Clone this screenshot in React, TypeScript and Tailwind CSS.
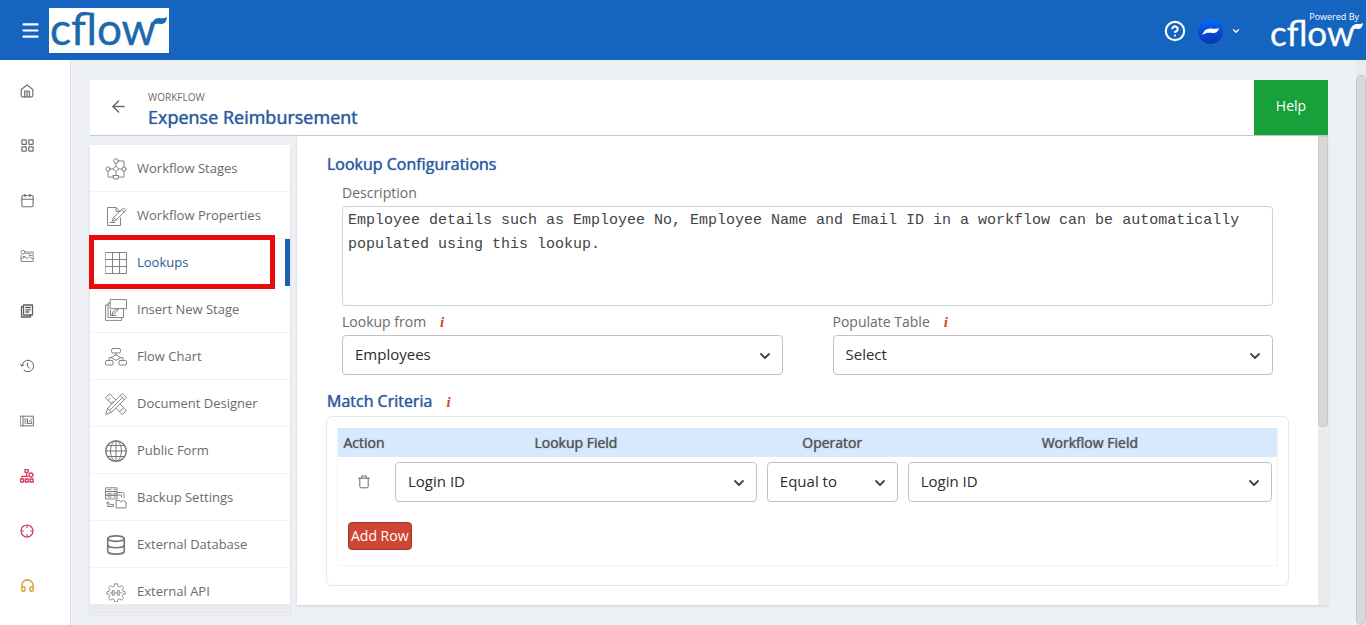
import React, { useState } from 'react';
import { ArrowLeft, Calendar, ChevronDown, CircleHelp, Database, Headphones, LayoutGrid, Menu } from 'lucide-react';

const Svg: React.FC<{ size: number; box: string; width?: number; children: React.ReactNode }> = ({ size, box, width = 1, children }) => (
  <svg width={size} height={size} viewBox={box} fill="none" stroke="currentColor" strokeWidth={width} strokeLinejoin="round" strokeLinecap="round">
    {children}
  </svg>
);

const HomeIcon = () => (
  <Svg size={14} box="0 0 14 14" width={1.2}>
    <path d="M1.2 5.4 7 1l5.8 4.4v6.2a1.2 1.2 0 0 1-1.2 1.2H2.4a1.2 1.2 0 0 1-1.2-1.2z" />
    <path d="M4.7 12.8V7h4.6v5.8M7 7v5.8" />
  </Svg>
);

const CardIcon = () => (
  <Svg size={14} box="0 0 14 14" width={0.8}>
    <path d="M6 3h7.2v9.5H1V6" />
    <circle cx="3" cy="3.2" r="2" />
    <path d="M6 4.7h5M3 7.5h2M1 10l3.5-2 3 1.5 2-1.5 3.5 2M9 6.5h3" />
  </Svg>
);

const FormsIcon = () => (
  <Svg size={14} box="0 0 14 14" width={1.3}>
    <path d="M3.5 1h9v10h-9z" />
    <path d="M3.5 2.7h-2V13h9v-2M5.8 3.5h4.5M5.8 5.8h4.5M5.8 8h3" />
  </Svg>
);

const HistoryIcon = () => (
  <Svg size={14} box="0 0 14 14">
    <path d="M2 7a5.800 5.800 0 1 1 2 4.400" />
    <path d="m.5 5.500 1.500 1.700 1.800-1.500M7.500 4v3.200l2 2" />
  </Svg>
);

const BoardIcon = () => (
  <Svg size={14} box="0 0 14 14">
    <path d="M.6 2.200h12.800v9.600H.6zM3 2.200v9.600M4.700 5h1.500M4.700 7h1.500M4.700 9h1.500M7.500 5v4.500h4V7.500" />
    <path d="m8.800 8 3-3" />
  </Svg>
);

const OrgIcon = () => (
  <Svg size={14} box="0 0 14 14" width={1.3}>
    <path d="M5 .7h3.200v2.600H5zM6.600 3.300v4M2 8.500V7.300h6" />
    <circle cx="11" cy="6" r="2" />
    <path d="M.6 10h3v3h-3zM5.400 10h3v3h-3zM10.200 10h3v3h-3z" />
  </Svg>
);

const TargetIcon = () => (
  <Svg size={14} box="0 0 14 14" width={1.2}>
    <circle cx="7" cy="7" r="6" />
    <path d="M7 1v2.500M7 10.500V13M1 7h2.500M10.500 7H13" />
  </Svg>
);

const TrashIcon = () => (
  <Svg size={14} box="0 0 14 14">
    <path d="M1.500 3.200h11M4.700 3V1h4.600v2M2.800 3.200v8.300q0 1.300 1.300 1.300h5.800q1.300 0 1.300-1.300V3.200" />
  </Svg>
);

const StagesIcon = () => (
  <Svg size={22} box="0 0 22 22" width={0.9}>
    <circle cx="11" cy="3" r="2.3" />
    <circle cx="3" cy="11" r="2.1" />
    <circle cx="19" cy="11" r="2.1" />
    <path d="M8.300 17.500h5.400l-.8 3.500H9.100zM11 8.300l2.700 2.700-2.700 2.700L8.300 11zM11 5.300v3M5.100 11h3.200M13.700 11h3.200M11 13.700v3.800M13.300 3H19v5.900M3 13.100v6h5.700M13.300 19.100H19v-6" />
  </Svg>
);

const PropertiesIcon = () => (
  <Svg size={22} box="0 0 22 22" width={0.9}>
    <path d="M15.500 13v7.500h-13v-18H11l4 4M11 2.500v4h4" />
    <path d="m8.500 12.500 10-9.500 2.300 2.300-9.600 9.700-3.700 1.200zM16.800 4.700 19 7M8.500 12.500l2.700 2.500M5 17.500h5" />
  </Svg>
);

const GridIcon = () => (
  <Svg size={22} box="0 0 22 22" width={0.9}>
    <path d="M.5.5h21v21H.5zM.5 7.500h21M.5 14.500h21M7.500.5v21M14.500.5v21" />
  </Svg>
);

const InsertIcon = () => (
  <Svg size={22} box="0 0 22 22" width={0.9}>
    <path d="M5.500.6h16v9h-16zM5.500 4H3v14.500h15.500v-9" />
    <path d="M3 6H.6v15.400h16v-2.900M5.500 11.500v5h5.500M7 15.500l.8-2.500 4-3h1.500l-1.500 2.500-3.500 2.500z" />
  </Svg>
);

const FlowIcon = () => (
  <Svg size={22} box="0 0 22 22" width={0.9}>
    <rect x="6.5" y="2.5" width="9" height="4.5" rx="1.5" />
    <rect x=".5" y="14.5" width="7.5" height="4.5" rx="1" />
    <rect x="14" y="14.5" width="7.5" height="4.5" rx="1" />
    <path d="M11 7v2M11 9l4.500 2.700L11 14.400 6.500 11.700zM6.500 11.700H4v2.800M15.500 11.700H18v2.800" />
  </Svg>
);

const DesignerIcon = () => (
  <Svg size={22} box="0 0 22 22" width={0.9}>
    <path d="M.7 4.500 4.500.7l16.800 16.800-3.800 3.800zM3.500 7.300l1.700-1.700M6.300 10.100l1.700-1.700M14.700 18.500l1.700-1.700M17.500 15.500l-1.500 1.500" />
    <path d="M17.500.7 21.300 4.500 6.500 19.300.7 21.300l2-5.800zM15.500 2.700l3.800 3.800M2.700 15.500l3.800 3.800M4.600 17.400 17.400 4.600" fill="white" />
  </Svg>
);

const GlobeIcon = () => (
  <Svg size={22} box="0 0 22 22">
    <circle cx="11" cy="11" r="10.2" strokeWidth="1.3" />
    <ellipse cx="11" cy="11" rx="5.5" ry="10.2" />
    <path d="M11 .8v20.400M.8 11h20.400M2.800 5.500h16.400M2.800 16.500h16.400" />
  </Svg>
);

const BackupIcon = () => (
  <Svg size={22} box="0 0 22 22" width={0.9}>
    <path d="M1 .8h11v3.700H1zM1 4.500h11v3.700H1zM1 8.200h11V12H1zM3 2.600h3M3 6.300h3M3 10h3M9 2.600h1.500M9 6.300h1.500M9 10h1.500" />
    <path d="M12 5.500h5.500q1.500 0 1.500 1.500v3.500M12 8h4.500v2M3 19.500V15M1.300 16.500 3 14.800l1.700 1.700M3 19.500h5.500v-2H5" />
    <path d="M11.500 13.500h3l1 1.200 3-1.200 2.500 1.700v5.700h-9.500z" />
  </Svg>
);

const ApiIcon = () => (
  <Svg size={20} box="0 0 22 22" width={0.9}>
    <path d="M9.500 2h3l.5 2.500 2 .9 2.200-1.400 2 2-1.300 2.300.8 1.900 2.300.5v2.600l-2.300.5-.8 1.900 1.300 2.300-2 2-2.200-1.400-2 .9-.5 2.500h-3L9 19.500l-2-.9L4.800 20l-2-2 1.300-2.300-.8-1.900L1 13.300v-2.600l2.300-.5.8-1.900L2.800 6l2-2L7 5.400l2-.9z" />
    <path d="M7.300 9.500H9v5H7.300zM13 9.500h1.700v5H13zM9.800 12h2.500M4.800 12h1.500M15.700 12h1.500" />
  </Svg>
);

const railItems = [
  { label: 'Home', icon: <HomeIcon />, color: 'text-[#707070]' },
  { label: 'Apps', icon: <LayoutGrid size={15} strokeWidth={2} />, color: 'text-[#707070]' },
  { label: 'Calendar', icon: <Calendar size={15} strokeWidth={1.8} />, color: 'text-[#707070]' },
  { label: 'Cards', icon: <CardIcon />, color: 'text-[#707070]' },
  { label: 'Forms', icon: <FormsIcon />, color: 'text-[#606060]' },
  { label: 'History', icon: <HistoryIcon />, color: 'text-[#606060]' },
  { label: 'Board', icon: <BoardIcon />, color: 'text-[#707070]' },
  { label: 'Organization', icon: <OrgIcon />, color: 'text-[#d83a5e]' },
  { label: 'Target', icon: <TargetIcon />, color: 'text-[#c83c60]' },
  { label: 'Support', icon: <Headphones size={15} strokeWidth={2.5} />, color: 'text-[#dda637]' },
];

const menuItems = [
  { label: 'Workflow Stages', icon: <StagesIcon /> },
  { label: 'Workflow Properties', icon: <PropertiesIcon /> },
  { label: 'Lookups', icon: <GridIcon /> },
  { label: 'Insert New Stage', icon: <InsertIcon /> },
  { label: 'Flow Chart', icon: <FlowIcon /> },
  { label: 'Document Designer', icon: <DesignerIcon /> },
  { label: 'Public Form', icon: <GlobeIcon /> },
  { label: 'Backup Settings', icon: <BackupIcon /> },
  { label: 'External Database', icon: <Database size={24} strokeWidth={1.8} /> },
  { label: 'External API', icon: <ApiIcon /> },
];

const Logo: React.FC = () => (
  <svg width="120" height="45" viewBox="0 0 120 45" className="overflow-visible" role="img" aria-label="cflow">
    <text x="1" y="37" fontFamily="Lato, sans-serif" fontSize="44" fill="currentColor" stroke="currentColor" strokeWidth="0.4">cflow</text>
    <path d="M101 20c2-7 5-10 9-10 3 .5 5 .5 8-1-.5 5-2.500 7-6 7-4-.5-8-1-11 4z" fill="currentColor" />
  </svg>
);

interface SelectProps {
  id?: string;
  label?: string;
  options: string[];
}

const SelectBox: React.FC<SelectProps> = ({ id, label, options }) => (
  <div className="relative">
    <select
      id={id}
      aria-label={label}
      className="block h-10 w-full appearance-none rounded border border-[#c2c2c2] bg-white pr-10 pb-[2px] pl-3 text-[15px] text-[#2c2c2c]"
    >
      {options.map((option) => (
        <option key={option}>{option}</option>
      ))}
    </select>
    <ChevronDown size={16} strokeWidth={2.7} className="pointer-events-none absolute top-[13px] right-[10px] text-[#444]" />
  </div>
);

const Info = () => (
  <span className="ml-[14px] font-['Liberation_Serif',serif] text-[15px] font-bold text-[#cc4a31] italic [text-shadow:none]">i</span>
);

export default function App() {
  const [active, setActive] = useState('Lookups');

  return (
    <div className="flex h-screen flex-col overflow-hidden bg-[#edf1f5] font-['Open_Sans',sans-serif] text-[#6b6b6b]">
      <header className="flex h-15 shrink-0 items-center bg-[#1565c0] text-white">
        <button aria-label="Menu" className="mr-2 ml-5">
          <Menu size={21} strokeWidth={2.5} />
        </button>
        <a href="#" className="bg-white text-[#1b69ac]">
          <Logo />
        </a>
        <div className="ml-auto flex items-center pt-[2px]">
          <button aria-label="Help center">
            <CircleHelp size={22} strokeWidth={2.3} />
          </button>
          <button aria-label="Account" className="ml-3 flex items-center gap-2">
            <svg width="25" height="25" viewBox="0 0 25 25">
              <defs>
                <linearGradient id="avatar" x1="0" y1="0" x2="0" y2="1">
                  <stop offset="0" stopColor="#0868f5" />
                  <stop offset="1" stopColor="#0732b5" />
                </linearGradient>
              </defs>
              <circle cx="12.5" cy="12.5" r="12.5" fill="url(#avatar)" />
              <path d="M4 16c2-5 5-7 9-6.500 3 .5 5 .5 8-.5-1 4-3 5-6 5-4-.5-7-.5-11 2z" fill="white" />
            </svg>
            <ChevronDown size={10} strokeWidth={3} />
          </button>
          <div className="ml-[29px] flex w-24 flex-col">
            <span className="mr-[7px] self-end text-[9px] leading-3">Powered By</span>
            <svg width="96" height="28" viewBox="0 0 96 28" className="overflow-visible" role="img" aria-label="cflow">
              <text x="0" y="23" fontFamily="Lato, sans-serif" fontSize="35" fill="currentColor" stroke="currentColor" strokeWidth="0.3">cflow</text>
              <path d="M80 9c1-6 4-8 7-8 2 .3 3 .3 6-1-.5 4-2 6-5 6-4-.5-6-.5-8 3z" fill="currentColor" />
            </svg>
          </div>
        </div>
      </header>

      <div className="flex min-h-0 flex-1">
        <aside className="flex w-[71px] shrink-0 flex-col border-r border-[#dfe2e5] bg-white pt-[3px]">
          {railItems.map((item) => (
            <a key={item.label} href="#" aria-label={item.label} className={`flex h-[55px] items-center pl-5 ${item.color}`}>
              {item.icon}
            </a>
          ))}
        </aside>

        <main className="flex min-w-0 flex-1 flex-col pt-5 pr-7 pl-[19px]">
          <div className="flex h-14 shrink-0 border-b border-[#c8cacc] bg-white">
            <button aria-label="Back" className="flex w-14 items-center justify-center pb-[2px]">
              <ArrowLeft size={19} strokeWidth={1.9} />
            </button>
            <div className="flex flex-1 flex-col pt-2 pl-[2px]">
              <span className="text-[10px] leading-[18px]">WORKFLOW</span>
              <h1 className="text-lg leading-[22px] text-[#2f5a9f] [text-shadow:0_0_1px_currentColor]">Expense Reimbursement</h1>
            </div>
            <button className="w-[74px] bg-[#18a03a] pb-1 text-sm text-white">Help</button>
          </div>

          <div className="flex min-h-0 flex-1">
            <nav className="mt-[9px] mr-[7px] mb-[11px] flex w-[200px] shrink-0 flex-col bg-white shadow">
              <div className="min-h-0 flex-1">
                {menuItems.map((item) => (
                  <div key={item.label} className="relative">
                    <button
                      onClick={() => setActive(item.label)}
                      className={`flex h-[47px] w-full items-center gap-[10px] border-b border-[#f2f2f2] pt-px pl-[15px] text-left text-[13px] ${
                        active === item.label ? 'text-[#1f5a9c]' : ''
                      }`}
                    >
                      <span className="flex w-[22px] justify-center text-[#777]">{item.icon}</span>
                      {item.label}
                    </button>
                    {active === item.label && (
                      <>
                        <div className="absolute inset-y-0 right-0 w-[5px] bg-[#1b5fae]" />
                        <div className="pointer-events-none absolute -top-1 -left-px h-[54px] w-[186px] border-[5px] border-[#e90b0b]" />
                      </>
                    )}
                  </div>
                ))}
              </div>
              <div className="relative h-[10px] shrink-0 bg-[#ebebeb]" />
            </nav>

            <section className="mb-5 flex min-w-0 flex-1 bg-white shadow">
              <div className="min-w-0 flex-1 overflow-hidden px-[29px] pt-4">
                <h2 className="pl-px text-base leading-6 text-[#2f5a9f] [text-shadow:0_0_1px_currentColor]">Lookup Configurations</h2>
                <div className="px-4">
                  <label htmlFor="description" className="mt-1 block text-sm leading-[26px]">Description</label>
                  <textarea
                    id="description"
                    className="block h-[100px] w-full resize-none rounded-sm border border-[#d2d2d2] px-[5px] pt-[2px] font-['Liberation_Mono',monospace] text-[15px] leading-6 text-[#444]"
                    defaultValue="Employee details such as Employee No, Employee Name and Email ID in a workflow can be automatically populated using this lookup."
                  />
                  <div className="mt-1 grid grid-cols-2 gap-x-[50px]">
                    <div>
                      <label htmlFor="lookup-from" className="block h-[25px] text-sm leading-6">Lookup from<Info /></label>
                      <SelectBox id="lookup-from" options={['Employees']} />
                    </div>
                    <div>
                      <label htmlFor="populate" className="block h-[25px] text-sm leading-6">Populate Table<Info /></label>
                      <SelectBox id="populate" options={['Select']} />
                    </div>
                  </div>
                </div>

                <h2 className="mt-[14px] pl-px text-base leading-6 text-[#2f5a9f] [text-shadow:0_0_1px_currentColor]">Match Criteria<Info /></h2>
                <div className="mt-[2px] rounded-md border border-[#e8e8e8] px-[10px] pt-[11px] pb-[19px]">
                  <div className="border border-t-0 border-[#f4f4f4]">
                    <table className="w-full table-fixed">
                      <thead>
                        <tr className="h-[29px] bg-[#d7e9ff] text-sm text-[#555] [text-shadow:0_0_1px_currentColor]">
                          <th className="w-[52px] font-normal">Action</th>
                          <th className="w-[39.6%] font-normal">Lookup Field</th>
                          <th className="w-[15%] font-normal">Operator</th>
                          <th className="font-normal">Workflow Field</th>
                        </tr>
                      </thead>
                      <tbody>
                        <tr>
                          <td className="p-[5px]">
                            <button aria-label="Delete row" className="flex w-full justify-center"><TrashIcon /></button>
                          </td>
                          <td className="p-[5px]"><SelectBox label="Lookup Field" options={['Login ID']} /></td>
                          <td className="p-[5px]"><SelectBox label="Operator" options={['Equal to']} /></td>
                          <td className="p-[5px]"><SelectBox label="Workflow Field" options={['Login ID']} /></td>
                        </tr>
                      </tbody>
                    </table>
                    <button className="my-[15px] ml-[10px] block h-7 rounded-sm border border-[#9c352b] bg-[#cf4634] px-[2px] text-sm text-white">
                      Add Row
                    </button>
                  </div>
                </div>
              </div>
              <div className="w-[10px] shrink-0 bg-[#ebebeb]">
                <div className="h-[62%] rounded-b border border-[#c9c9c9] bg-[#d8d8d8]" />
              </div>
            </section>
          </div>
        </main>

        <div className="w-[10px] shrink-0 bg-[#ebebeb] pt-[15px]">
          <div className="h-full rounded-md border border-[#c9c9c9] bg-[#d8d8d8]" />
        </div>
      </div>
    </div>
  );
}
